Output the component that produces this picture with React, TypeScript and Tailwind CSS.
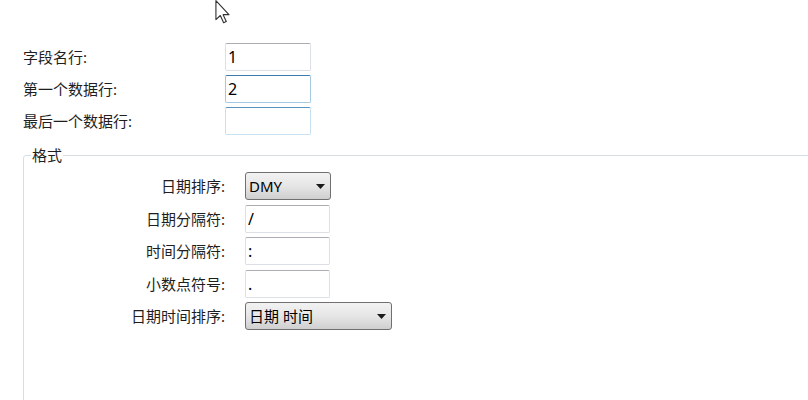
import React from "react";

const topRows = [
  { label: "字段名行:", value: "1", tone: "normal" },
  { label: "第一个数据行:", value: "2", tone: "focus" },
  { label: "最后一个数据行:", value: "", tone: "hover" },
];

const inputTone: Record<string, string> = {
  normal: "border-[#dbdfe6] border-t-[#abadb3]",
  focus: "border-[#a4c9e3] border-t-[#3d7bad]",
  hover: "border-[#c7e2f1] border-t-[#5794bf]",
};

function TextBox({ value, tone = "normal", width = "w-[86px]" }: { value: string; tone?: string; width?: string }) {
  return (
    <div className={`h-[28px] ${width} rounded-[2px] border bg-white px-[2px] flex items-center text-[16px] text-black ${inputTone[tone]}`}>
      {value}
    </div>
  );
}

function Combo({ value, width }: { value: string; width: string }) {
  return (
    <div
      className={`h-[28px] ${width} rounded-[3px] border border-[#707070] bg-linear-to-b from-[#f2f2f2] via-[#e6e6e6] to-[#cfcfcf] pl-[3px] pr-[5px] flex items-center justify-between text-[15px] text-black`}
    >
      <span>{value}</span>
      <svg width="9" height="5" viewBox="0 0 9 5">
        <path d="M0 0 L9 0 L4.5 5 Z" fill="#1a1a1a" />
      </svg>
    </div>
  );
}

function Cursor() {
  return (
    <svg className="absolute left-[215px] top-0" width="17" height="24" viewBox="0 0 13 19">
      <path
        d="M0.5 0.5 L0.5 15.5 L4 12.3 L6.6 18 L8.7 17.1 L6.2 11.6 L10.8 11.6 Z"
        fill="#fff"
        stroke="#333"
        strokeWidth="0.9"
        strokeLinejoin="round"
      />
    </svg>
  );
}

export default function App() {
  return (
    <div className="relative w-[808px] h-[400px] overflow-hidden bg-white text-[#1e1e1e] font-['Noto_Sans','Noto_Sans_CJK_SC',sans-serif] leading-[20px]">
      <Cursor />

      {/* top rows */}
      <div className="pt-[43px] pl-[23px] grid grid-cols-[202px_86px] gap-y-[4px] items-center text-[15px]">
        {topRows.map((r) => (
          <React.Fragment key={r.label}>
            <span>{r.label}</span>
            <TextBox value={r.value} tone={r.tone} />
          </React.Fragment>
        ))}
      </div>

      {/* format group */}
      <fieldset className="ml-[23px] mt-[10px] w-[820px] h-[300px] border border-[#d5dfe5] rounded-tl-[3px] pt-[7px]">
        <legend className="ml-[7px] px-[1px] text-[15px] leading-[20px]">格式</legend>
        <div className="grid grid-cols-[201px_auto] gap-x-[20px] gap-y-[4.5px] items-center text-[15px]">
          <span className="text-right">日期排序:</span>
          <Combo value="DMY" width="w-[86px]" />
          <span className="text-right">日期分隔符:</span>
          <TextBox value="/" width="w-[85px]" />
          <span className="text-right">时间分隔符:</span>
          <TextBox value=":" width="w-[85px]" />
          <span className="text-right">小数点符号:</span>
          <TextBox value="." width="w-[85px]" />
          <span className="text-right">日期时间排序:</span>
          <Combo value="日期 时间" width="w-[147px]" />
        </div>
      </fieldset>
    </div>
  );
}
